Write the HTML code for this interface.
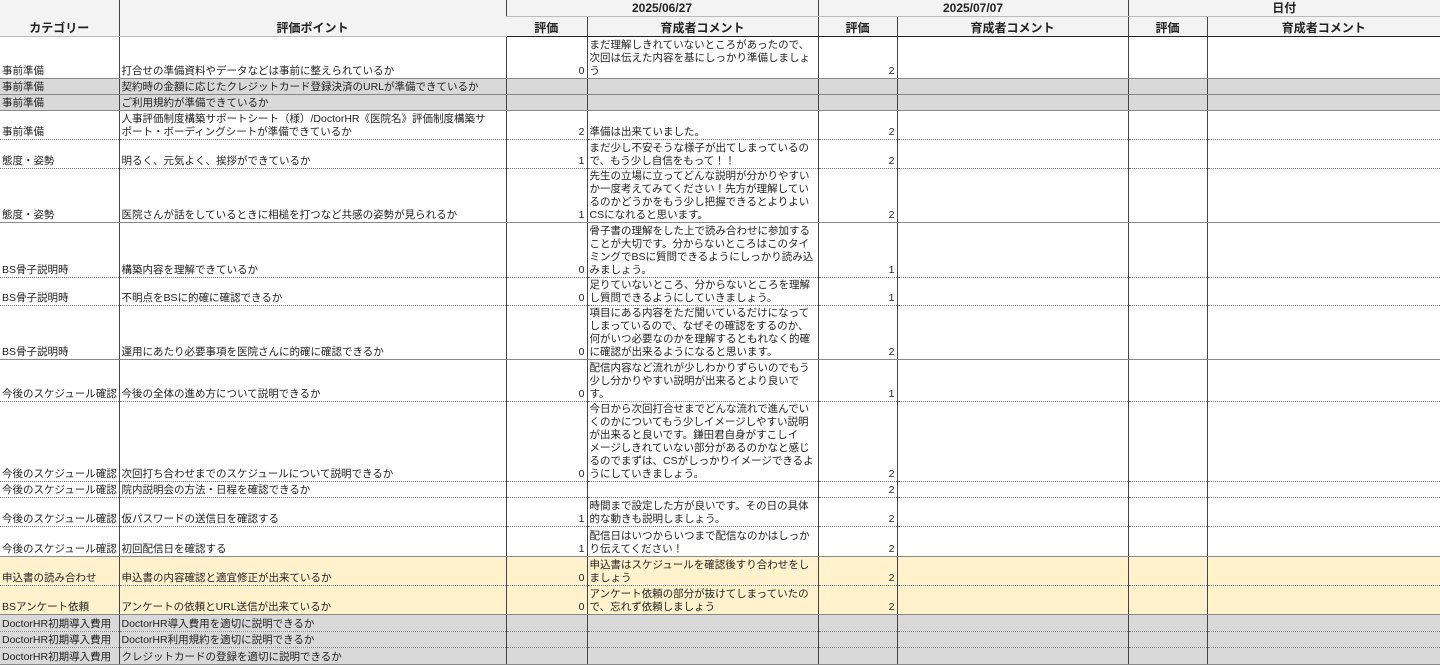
<!DOCTYPE html>
<html><head><meta charset="utf-8"><style>
*{margin:0;padding:0;box-sizing:border-box}
body{width:1440px;height:665px;overflow:hidden;background:#fff;font-family:"Liberation Sans","Noto Sans CJK JP",sans-serif;font-size:10.5px;color:#222}
table{border-collapse:collapse;table-layout:fixed;position:absolute;left:0;top:0;width:1440px}
td{overflow:hidden;white-space:nowrap;vertical-align:bottom;padding:0 2px 0 2px;line-height:13px;border-left:1px solid #444;border-bottom:1px dotted #777}
td:first-child{border-left:none}
tr.s td{border-bottom:1px solid #888}
th{background:#f3f3f3;font-weight:bold;font-size:12px;border-left:1px solid #444;border-bottom:1px solid #bbb;line-height:15px;vertical-align:bottom}
th:first-child{border-left:none}
tr.h2 th{border-bottom:1px solid #222}
.n{text-align:right}
.g td{background:#d9d9d9}
.y td{background:#fff2cc}
</style></head><body>
<table>
<colgroup><col style="width:119px"><col style="width:387px"><col style="width:81px"><col style="width:231px"><col style="width:79px"><col style="width:231px"><col style="width:79px"><col style="width:233px"></colgroup>
<tr style="height:16px"><th rowspan="2">カテゴリー</th><th rowspan="2">評価ポイント</th><th colspan="2">2025/06/27</th><th colspan="2">2025/07/07</th><th colspan="2">日付</th></tr>
<tr class="h2" style="height:20px"><th>評価</th><th>育成者コメント</th><th>評価</th><th>育成者コメント</th><th>評価</th><th>育成者コメント</th></tr>
<tr class="s" style="height:42px"><td>事前準備</td><td>打合せの準備資料やデータなどは事前に整えられているか</td><td class="n">0</td><td>まだ理解しきれていないところがあったので、<br>次回は伝えた内容を基にしっかり準備しましょ<br>う</td><td class="n">2</td><td></td><td></td><td></td></tr>
<tr class="g s" style="height:16px"><td>事前準備</td><td>契約時の金額に応じたクレジットカード登録決済のURLが準備できているか</td><td></td><td></td><td></td><td></td><td></td><td></td></tr>
<tr class="g s" style="height:16px"><td>事前準備</td><td>ご利用規約が準備できているか</td><td></td><td></td><td></td><td></td><td></td><td></td></tr>
<tr style="height:29px"><td>事前準備</td><td>人事評価制度構築サポートシート（様）/DoctorHR《医院名》評価制度構築サ<br>ポート・ボーディングシートが準備できているか</td><td class="n">2</td><td>準備は出来ていました。</td><td class="n">2</td><td></td><td></td><td></td></tr>
<tr style="height:29px"><td>態度・姿勢</td><td>明るく、元気よく、挨拶ができているか</td><td class="n">1</td><td>まだ少し不安そうな様子が出てしまっているの<br>で、もう少し自信をもって！！</td><td class="n">2</td><td></td><td></td><td></td></tr>
<tr class="s" style="height:54px"><td>態度・姿勢</td><td>医院さんが話をしているときに相槌を打つなど共感の姿勢が見られるか</td><td class="n">1</td><td>先生の立場に立ってどんな説明が分かりやすい<br>か一度考えてみてください！先方が理解してい<br>るのかどうかをもう少し把握できるとよりよい<br>CSになれると思います。</td><td class="n">2</td><td></td><td></td><td></td></tr>
<tr style="height:55px"><td>BS骨子説明時</td><td>構築内容を理解できているか</td><td class="n">0</td><td>骨子書の理解をした上で読み合わせに参加する<br>ことが大切です。分からないところはこのタイ<br>ミングでBSに質問できるようにしっかり読み込<br>みましょう。</td><td class="n">1</td><td></td><td></td><td></td></tr>
<tr style="height:28px"><td>BS骨子説明時</td><td>不明点をBSに的確に確認できるか</td><td class="n">0</td><td>足りていないところ、分からないところを理解<br>し質問できるようにしていきましょう。</td><td class="n">1</td><td></td><td></td><td></td></tr>
<tr class="s" style="height:54px"><td>BS骨子説明時</td><td>運用にあたり必要事項を医院さんに的確に確認できるか</td><td class="n">0</td><td>項目にある内容をただ聞いているだけになって<br>しまっているので、なぜその確認をするのか、<br>何がいつ必要なのかを理解するともれなく的確<br>に確認が出来るようになると思います。</td><td class="n">2</td><td></td><td></td><td></td></tr>
<tr style="height:42px"><td>今後のスケジュール確認</td><td>今後の全体の進め方について説明できるか</td><td class="n">0</td><td>配信内容など流れが少しわかりずらいのでもう<br>少し分かりやすい説明が出来るとより良いで<br>す。</td><td class="n">1</td><td></td><td></td><td></td></tr>
<tr style="height:80px"><td>今後のスケジュール確認</td><td>次回打ち合わせまでのスケジュールについて説明できるか</td><td class="n">0</td><td>今日から次回打合せまでどんな流れで進んでい<br>くのかについてもう少しイメージしやすい説明<br>が出来ると良いです。鎌田君自身がすこしイ<br>メージしきれていない部分があるのかなと感じ<br>るのでまずは、CSがしっかりイメージできるよ<br>うにしていきましょう。</td><td class="n">2</td><td></td><td></td><td></td></tr>
<tr style="height:16px"><td>今後のスケジュール確認</td><td>院内説明会の方法・日程を確認できるか</td><td></td><td></td><td class="n">2</td><td></td><td></td><td></td></tr>
<tr style="height:29px"><td>今後のスケジュール確認</td><td>仮パスワードの送信日を確認する</td><td class="n">1</td><td>時間まで設定した方が良いです。その日の具体<br>的な動きも説明しましょう。</td><td class="n">2</td><td></td><td></td><td></td></tr>
<tr class="s" style="height:30px"><td>今後のスケジュール確認</td><td>初回配信日を確認する</td><td class="n">1</td><td>配信日はいつからいつまで配信なのかはしっか<br>り伝えてください！</td><td class="n">2</td><td></td><td></td><td></td></tr>
<tr class="y" style="height:29px"><td>申込書の読み合わせ</td><td>申込書の内容確認と適宜修正が出来ているか</td><td class="n">0</td><td>申込書はスケジュールを確認後すり合わせをし<br>ましょう</td><td class="n">2</td><td></td><td></td><td></td></tr>
<tr class="y s" style="height:29px"><td>BSアンケート依頼</td><td>アンケートの依頼とURL送信が出来ているか</td><td class="n">0</td><td>アンケート依頼の部分が抜けてしまっていたの<br>で、忘れず依頼しましょう</td><td class="n">2</td><td></td><td></td><td></td></tr>
<tr class="g" style="height:17px"><td>DoctorHR初期導入費用</td><td>DoctorHR導入費用を適切に説明できるか</td><td></td><td></td><td></td><td></td><td></td><td></td></tr>
<tr class="g" style="height:16px"><td>DoctorHR初期導入費用</td><td>DoctorHR利用規約を適切に説明できるか</td><td></td><td></td><td></td><td></td><td></td><td></td></tr>
<tr class="g s" style="height:17px"><td>DoctorHR初期導入費用</td><td>クレジットカードの登録を適切に説明できるか</td><td></td><td></td><td></td><td></td><td></td><td></td></tr>
</table>
</body></html>
